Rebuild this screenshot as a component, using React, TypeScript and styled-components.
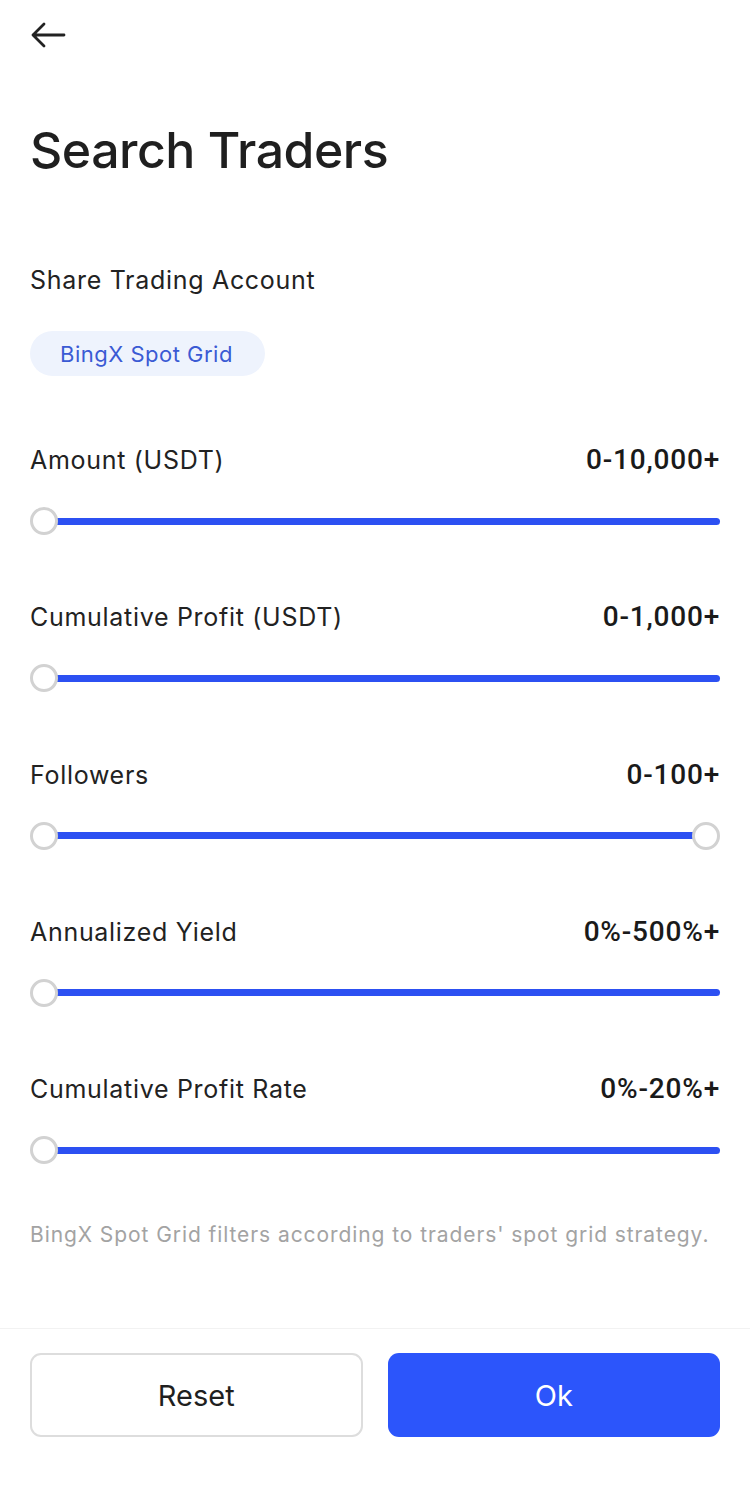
import React from "react";
import styled, { createGlobalStyle } from "styled-components";

const GlobalStyle = createGlobalStyle`
  html, body { margin: 0; padding: 0; background: #ffffff; }
  body { font-family: Inter, "Noto Sans", "Liberation Sans", sans-serif; color: #222222; }
  * { box-sizing: border-box; }
`;

const Page = styled.div`
  width: 750px;
  min-height: 1493px;
  display: flex;
  flex-direction: column;
  background: #ffffff;
`;

const Content = styled.div`
  padding: 0 30px;
  display: flex;
  flex-direction: column;
`;

const Header = styled.div`
  height: 70px;
  display: flex;
  align-items: center;
`;

const BackButton = styled.button`
  border: none;
  background: none;
  padding: 0;
  width: 36px;
  height: 28px;
  display: flex;
  align-items: center;
  cursor: pointer;
`;

const Title = styled.h1`
  margin: 50px 0 0;
  font-size: 50px;
  line-height: 60px;
  font-weight: 500;
  color: #1f1f1f;
  letter-spacing: -0.5px;
`;

const SectionLabel = styled.div`
  margin-top: 84px;
  font-size: 25px;
  line-height: 32px;
  letter-spacing: 0.7px;
  color: #222222;
`;

const PillRow = styled.div`
  margin-top: 35px;
  display: flex;
`;

const Pill = styled.div`
  height: 45px;
  padding: 0 32px 0 30px;
  border-radius: 23px;
  background: #eef3fd;
  color: #3a5ad4;
  font-size: 22px;
  letter-spacing: 0.5px;
  display: flex;
  align-items: center;
`;

const FilterBlock = styled.div<{ $first?: boolean }>`
  margin-top: ${(p) => (p.$first ? "68px" : "65.25px")};
  display: flex;
  flex-direction: column;
`;

const FilterHead = styled.div`
  display: flex;
  justify-content: space-between;
  align-items: baseline;
  line-height: 32px;
`;

const FilterLabel = styled.span`
  font-size: 25px;
  letter-spacing: 0.7px;
  color: #222222;
`;

const FilterValue = styled.span`
  font-family: Roboto, "Liberation Sans", sans-serif;
  font-size: 28px;
  font-weight: 500;
  letter-spacing: 0.8px;
  color: #1a1a1a;
`;

const SliderWrap = styled.div`
  margin-top: 30px;
  position: relative;
  height: 30px;
  width: 100%;
`;

const Track = styled.div`
  position: absolute;
  top: 50%;
  height: 7px;
  margin-top: -3.5px;
  border-radius: 4px;
  background: #2c50f2;
`;

const Thumb = styled.div`
  position: absolute;
  top: 1px;
  width: 28px;
  height: 28px;
  border-radius: 50%;
  background: #ffffff;
  border: 3px solid #d2d2d2;
`;

const Note = styled.p`
  margin: 56px 0 0;
  font-size: 21px;
  line-height: 28px;
  color: #a3a3a3;
  letter-spacing: 0.92px;
  white-space: nowrap;
`;

const Footer = styled.div`
  margin-top: 79px;
  border-top: 1px solid #f2f2f2;
  padding: 24px 30px 0;
  display: grid;
  grid-template-columns: 1fr 1fr;
  gap: 25px;
`;

const ActionButton = styled.button<{ $primary?: boolean }>`
  height: 84px;
  border-radius: 11px;
  font-family: Inter, "Noto Sans", "Liberation Sans", sans-serif;
  font-size: 29px;
  cursor: pointer;
  background: ${(p) => (p.$primary ? "#2c55fb" : "#ffffff")};
  color: ${(p) => (p.$primary ? "#ffffff" : "#1f1f1f")};
  border: ${(p) => (p.$primary ? "none" : "2px solid #dddddd")};
`;

type Filter = { label: string; value: string; bothThumbs?: boolean };

const filters: Filter[] = [
  { label: "Amount (USDT)", value: "0-10,000+" },
  { label: "Cumulative Profit (USDT)", value: "0-1,000+" },
  { label: "Followers", value: "0-100+", bothThumbs: true },
  { label: "Annualized Yield", value: "0%-500%+" },
  { label: "Cumulative Profit Rate", value: "0%-20%+" },
];

const RangeSlider: React.FC<{ bothThumbs?: boolean }> = ({ bothThumbs }) => (
  <SliderWrap>
    <Track style={{ left: 14, right: bothThumbs ? 14 : 0 }} />
    <Thumb style={{ left: 0 }} />
    {bothThumbs && <Thumb style={{ right: 0 }} />}
  </SliderWrap>
);

export default function App() {
  return (
    <Page>
      <GlobalStyle />
      <Content>
        <Header>
          <BackButton aria-label="Back">
            <svg width="36" height="28" viewBox="0 0 36 28" fill="none">
              <path
                d="M34 14H3M14 3L3 14L14 25"
                stroke="#222222"
                strokeWidth="2.8"
                strokeLinecap="round"
                strokeLinejoin="round"
              />
            </svg>
          </BackButton>
        </Header>
        <Title>Search Traders</Title>
        <SectionLabel>Share Trading Account</SectionLabel>
        <PillRow>
          <Pill>BingX Spot Grid</Pill>
        </PillRow>
        {filters.map((f, i) => (
          <FilterBlock key={f.label} $first={i === 0}>
            <FilterHead>
              <FilterLabel>{f.label}</FilterLabel>
              <FilterValue>{f.value}</FilterValue>
            </FilterHead>
            <RangeSlider bothThumbs={f.bothThumbs} />
          </FilterBlock>
        ))}
        <Note>BingX Spot Grid filters according to traders' spot grid strategy.</Note>
      </Content>
      <Footer>
        <ActionButton>Reset</ActionButton>
        <ActionButton $primary>Ok</ActionButton>
      </Footer>
    </Page>
  );
}
